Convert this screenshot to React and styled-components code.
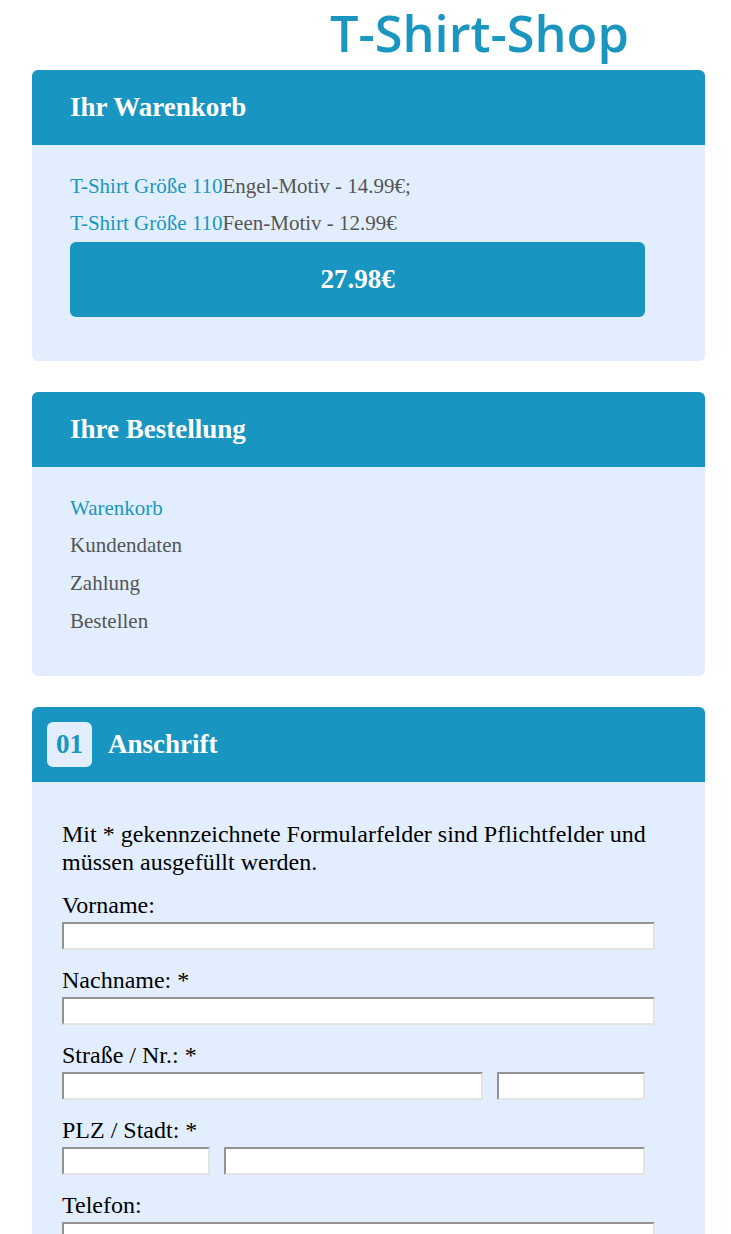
import React from "react";
import styled, { createGlobalStyle } from "styled-components";

const GlobalStyle = createGlobalStyle`
  body {
    margin: 0;
    background: #ffffff;
    font-family: "Liberation Serif", "Times New Roman", serif;
  }
`;

const Page = styled.div`
  width: 673px;
  padding: 0 26px 40px 32px;
  display: flex;
  flex-direction: column;
  gap: 31px;
`;

const Logo = styled.h1`
  margin: 0 0 -25px;
  padding-left: 298px;
  height: 64px;
  font-family: "Open Sans", sans-serif;
  font-weight: 600;
  font-size: 50.5px;
  line-height: 66px;
  color: #1a96c0;
`;

const Card = styled.section`
  border-radius: 6px;
  overflow: hidden;
  background: #e2eefe;
`;

const CardHeader = styled.div`
  height: 75px;
  display: flex;
  align-items: center;
  gap: 16px;
  padding-left: ${({ $badge }) => ($badge ? "15px" : "38px")};
  background: #1895c0;
  color: #ffffff;
  font-weight: 700;
  font-size: 27px;
`;

const Badge = styled.span`
  width: 45px;
  height: 45px;
  border-radius: 6px;
  background: #e2eefe;
  color: #1895c0;
  display: flex;
  align-items: center;
  justify-content: center;
`;

const CardBody = styled.div`
  padding: ${({ $pad }) => $pad};
`;

const Line = styled.div`
  font-size: 21px;
  line-height: 37.3px;
  color: #555555;
`;

const Product = styled.span`
  color: #1a96c0;
`;

const Total = styled.div`
  width: 575px;
  height: 75px;
  border-radius: 6px;
  background: #1895c0;
  color: #ffffff;
  font-weight: 700;
  font-size: 27px;
  display: flex;
  align-items: center;
  justify-content: center;
`;

const Step = styled.div`
  font-size: 21px;
  line-height: 37.6px;
  color: ${({ $active }) => ($active ? "#1a96c0" : "#555555")};
`;

const Note = styled.p`
  margin: 0 0 15px;
  font-size: 24px;
  line-height: 28px;
  color: #000000;
  width: 600px;
`;

const Field = styled.div`
  margin-bottom: 16px;
`;

const Label = styled.label`
  display: block;
  font-size: 24px;
  line-height: 28px;
  color: #000000;
`;

const Row = styled.div`
  display: flex;
  gap: 14px;
  margin-top: 3px;
`;

const Input = styled.input`
  box-sizing: border-box;
  display: block;
  width: ${({ $w }) => $w}px;
  height: 28px;
  margin: 0;
  padding: 0 4px;
  border: 2px solid;
  border-color: #939393 #e3e3e3 #e3e3e3 #939393;
  border-radius: 1px;
  background: #ffffff;
  font-family: "Liberation Serif", serif;
  font-size: 18px;
  outline: none;
`;

export default function App() {
  return (
    <>
      <GlobalStyle />
      <Page>
        <Logo>T-Shirt-Shop</Logo>

        <Card>
          <CardHeader>Ihr Warenkorb</CardHeader>
          <CardBody $pad="22.8px 38px 44px">
            <Line>
              <Product>T-Shirt Größe 110</Product>Engel-Motiv - 14.99€;
            </Line>
            <Line>
              <Product>T-Shirt Größe 110</Product>Feen-Motiv - 12.99€
            </Line>
            <Total>27.98€</Total>
          </CardBody>
        </Card>

        <Card>
          <CardHeader>Ihre Bestellung</CardHeader>
          <CardBody $pad="22.5px 38px 35.5px">
            <Step $active>Warenkorb</Step>
            <Step>Kundendaten</Step>
            <Step>Zahlung</Step>
            <Step>Bestellen</Step>
          </CardBody>
        </Card>

        <Card>
          <CardHeader $badge>
            <Badge>01</Badge>
            Anschrift
          </CardHeader>
          <CardBody $pad="38px 30px 30px">
            <Note>
              Mit * gekennzeichnete Formularfelder sind Pflichtfelder und
              müssen ausgefüllt werden.
            </Note>
            <Field>
              <Label>Vorname:</Label>
              <Row>
                <Input $w={593} />
              </Row>
            </Field>
            <Field>
              <Label>Nachname: *</Label>
              <Row>
                <Input $w={593} />
              </Row>
            </Field>
            <Field>
              <Label>Straße / Nr.: *</Label>
              <Row>
                <Input $w={421} />
                <Input $w={148} />
              </Row>
            </Field>
            <Field>
              <Label>PLZ / Stadt: *</Label>
              <Row>
                <Input $w={148} />
                <Input $w={421} />
              </Row>
            </Field>
            <Field>
              <Label>Telefon:</Label>
              <Row>
                <Input $w={593} />
              </Row>
            </Field>
            <Field>
              <Label>E-Mail: *</Label>
              <Row>
                <Input $w={593} />
              </Row>
            </Field>
          </CardBody>
        </Card>
      </Page>
    </>
  );
}
